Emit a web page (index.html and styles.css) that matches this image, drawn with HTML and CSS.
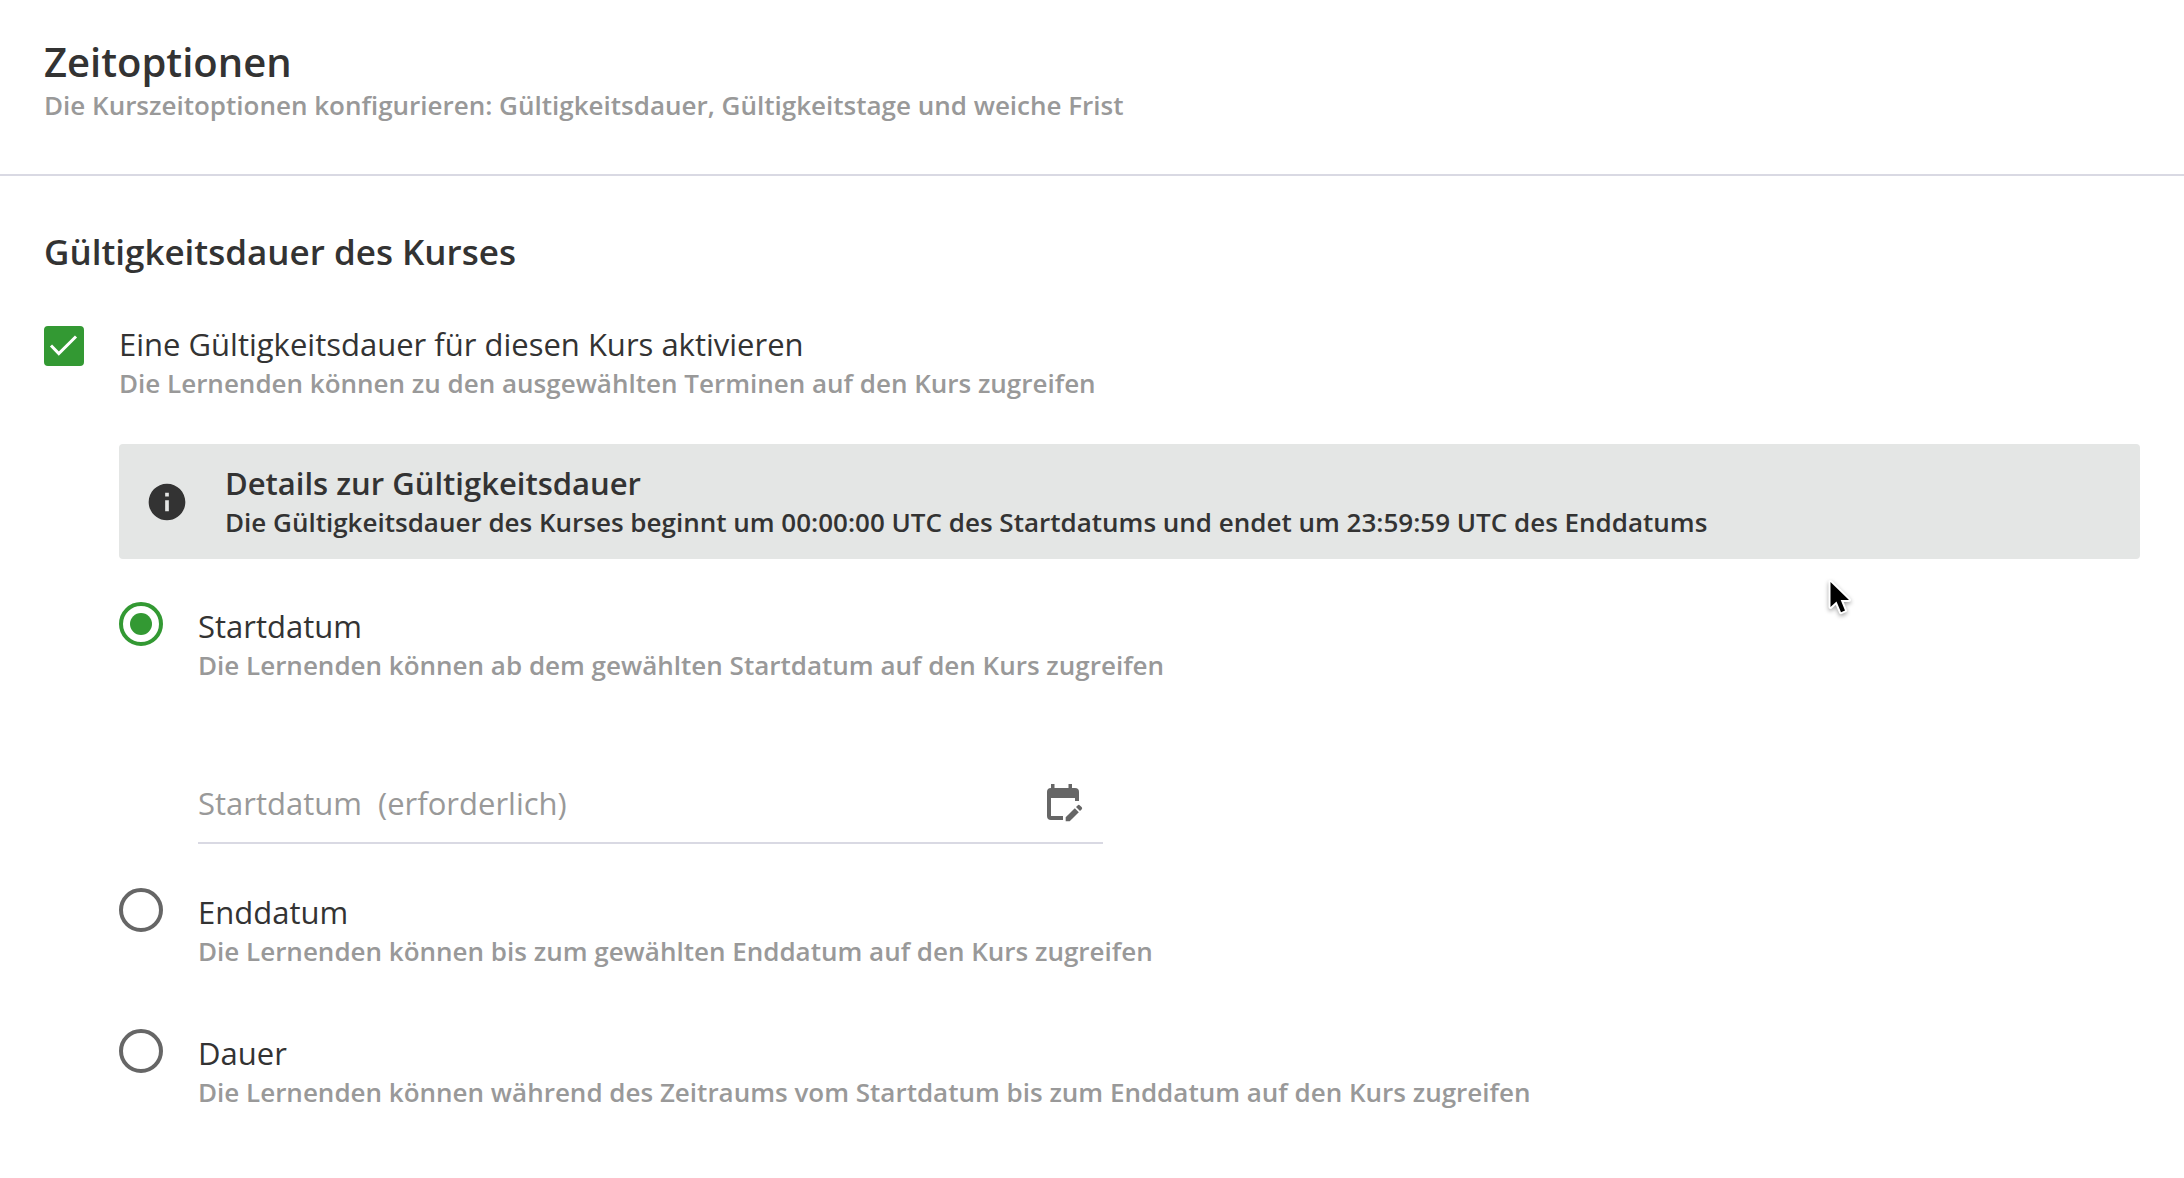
FILE: index.html
```html
<!DOCTYPE html>
<html lang="de">

<head>
    <meta charset="UTF-8">
    <meta name="viewport" content="width=device-width, initial-scale=1.0">
    <link rel="stylesheet" href="styles.css">
    <title>Zeitoptionen</title>
</head>

<body>
    <header class="page-header">
        <h1>Zeitoptionen</h1>
        <p class="hint">Die Kurszeitoptionen konfigurieren: Gültigkeitsdauer, Gültigkeitstage und weiche Frist</p>
    </header>

    <main class="content">
        <h2>Gültigkeitsdauer des Kurses</h2>

        <div class="option option-checkbox">
            <div class="checkbox">
                <input type="checkbox" id="enable-validity" checked>
                <svg class="checkbox-mark" viewBox="0 0 40 40" aria-hidden="true">
                    <path d="M7 19.5 L14.8 27.5 L32 10.5" />
                </svg>
            </div>
            <div class="option-text">
                <label for="enable-validity">Eine Gültigkeitsdauer für diesen Kurs aktivieren</label>
                <p class="hint">Die Lernenden können zu den ausgewählten Terminen auf den Kurs zugreifen</p>
            </div>
        </div>

        <div class="validity">
            <!-- Info box -->
            <div class="info-box">
                <svg class="info-icon" viewBox="0 0 24 24" aria-hidden="true">
                    <path d="M12 2C6.48 2 2 6.48 2 12s4.48 10 10 10 10-4.48 10-10S17.52 2 12 2zm1 15h-2v-6h2v6zm0-8h-2V7h2v2z" />
                </svg>
                <div>
                    <h3>Details zur Gültigkeitsdauer</h3>
                    <p>Die Gültigkeitsdauer des Kurses beginnt um 00:00:00 UTC des Startdatums und endet um 23:59:59 UTC des Enddatums</p>
                </div>
            </div>

            <!-- Start date -->
            <div class="option">
                <input type="radio" name="validity-type" id="type-start" checked>
                <div class="option-text">
                    <label for="type-start">Startdatum</label>
                    <p class="hint">Die Lernenden können ab dem gewählten Startdatum auf den Kurs zugreifen</p>
                    <div class="date-field">
                        <input type="text" id="start-date" aria-label="Startdatum" placeholder="Startdatum&nbsp; (erforderlich)">
                        <button type="button" aria-label="Datum wählen">
                            <svg viewBox="0 0 40 40" aria-hidden="true">
                                <path d="M8 1h3.500v4h14V1H29v4h3a4 4 0 0 1 4 4v9h-4v-3H8v18h12v4H8a4 4 0 0 1-4-4V9a4 4 0 0 1 4-4z" />
                                <path d="M31.800 25.200l4 4L26.700 38.300h-4v-4z" />
                                <path d="M33 24l1.600-1.600a1.600 1.600 0 0 1 2.300 0l1.700 1.700a1.600 1.600 0 0 1 0 2.300L37 28z" />
                            </svg>
                        </button>
                    </div>
                </div>
            </div>

            <!-- End date -->
            <div class="option">
                <input type="radio" name="validity-type" id="type-end">
                <div class="option-text">
                    <label for="type-end">Enddatum</label>
                    <p class="hint">Die Lernenden können bis zum gewählten Enddatum auf den Kurs zugreifen</p>
                </div>
            </div>

            <!-- Duration -->
            <div class="option">
                <input type="radio" name="validity-type" id="type-duration">
                <div class="option-text">
                    <label for="type-duration">Dauer</label>
                    <p class="hint">Die Lernenden können während des Zeitraums vom Startdatum bis zum Enddatum auf den Kurs zugreifen</p>
                </div>
            </div>
        </div>
    </main>

    <svg class="pointer" viewBox="0 0 60 60" aria-hidden="true">
        <path d="M20.500 12V37L26.500 31.500L31 42.200L35 40.500L30.700 30H39z" />
    </svg>
</body>

</html>
```

FILE: styles.css
```css
* {
    box-sizing: border-box;
}

body {
    margin: 0;
    font-family: 'Open Sans', sans-serif;
    font-size: 26px;
    line-height: 38px;
    color: #333;
    background: #fff;
}

h1,
h2,
h3,
p {
    margin: 0;
    font-weight: 600;
}

h1 {
    font-size: 40px;
    line-height: 48px;
}

h2 {
    font-size: 35px;
    line-height: 48px;
}

h3 {
    font-size: 31px;
    line-height: 40px;
}

.hint {
    color: #999;
}

.page-header {
    padding: 38px 44px 50px;
    border-bottom: 2px solid #d9d9e3;
}

.content {
    padding: 52px 44px;
}

/* Checkbox and radio rows */
.option {
    display: flex;
    align-items: flex-start;
    gap: 35px;
    margin-bottom: 59px;
}

.option-text {
    flex: 1;
    padding-top: 4px;
}

.option label {
    display: block;
    font-size: 31px;
    line-height: 40px;
}

.option-checkbox {
    margin: 44px 0 42px;
}

.checkbox {
    position: relative;
    width: 40px;
    height: 40px;
    margin-top: 6px;
}

input[type="checkbox"] {
    appearance: none;
    display: block;
    width: 40px;
    height: 40px;
    margin: 0;
    border: 4px solid #666;
    border-radius: 4px;
}

input[type="checkbox"]:checked {
    background: #393;
    border-color: #393;
}

.checkbox-mark {
    position: absolute;
    top: 0;
    left: 0;
    width: 40px;
    height: 40px;
    fill: none;
    stroke: #fff;
    stroke-width: 3;
    pointer-events: none;
}

input[type="radio"] {
    appearance: none;
    display: grid;
    place-items: center;
    width: 44px;
    height: 44px;
    margin: 0;
    border: 4px solid #666;
    border-radius: 50%;
}

input[type="radio"]:checked {
    border-color: #393;
}

input[type="radio"]:checked::before {
    content: "";
    width: 22px;
    height: 22px;
    border-radius: 50%;
    background: #393;
}

.validity {
    padding-left: 75px;
}

.info-box {
    display: flex;
    align-items: center;
    gap: 36px;
    margin-bottom: 43px;
    padding: 19px 26px 18px;
    border-radius: 4px;
    background: #e4e6e5;
}

.info-icon {
    flex: none;
    width: 44px;
    height: 44px;
    fill: #333;
}

/* Date field */
.date-field {
    display: flex;
    align-items: center;
    width: 905px;
    max-width: 100%;
    height: 81px;
    margin: 79px 0 -15px;
    padding-right: 20px;
    border-bottom: 2px solid #d9d9e3;
}

.date-field input {
    flex: 1;
    min-width: 0;
    height: 48px;
    padding: 0;
    border: none;
    outline: none;
    background: none;
    font-family: inherit;
    font-size: 31px;
    color: #333;
}

.date-field input::placeholder {
    color: #999;
    opacity: 1;
}

.date-field button {
    padding: 0;
    border: none;
    background: none;
    cursor: pointer;
}

.date-field svg {
    display: block;
    width: 40px;
    height: 40px;
    fill: #666;
}

/* Mouse pointer */
.pointer {
    position: absolute;
    top: 570px;
    left: 1810px;
    width: 60px;
    height: 60px;
    fill: #000;
    stroke: #fff;
    stroke-width: 4;
    stroke-linejoin: round;
    paint-order: stroke;
    filter: drop-shadow(0 2px 2px rgba(0, 0, 0, 0.35));
    pointer-events: none;
}
```
